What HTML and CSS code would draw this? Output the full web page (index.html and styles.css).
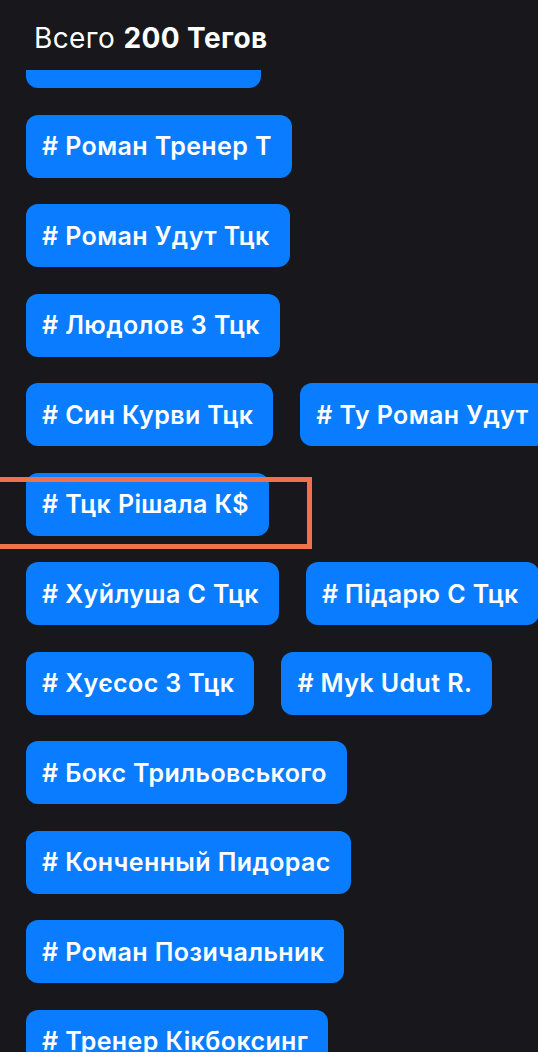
FILE: index.html
```html
<!DOCTYPE html>
<html lang="uk">
<head>
  <meta charset="UTF-8">
  <meta name="viewport" content="width=device-width, initial-scale=1.0">
  <title>Теги</title>
  <link rel="stylesheet" href="styles.css">
</head>
<body>
  <header class="tags-header">
    Всего <b>200 Тегов</b>
  </header>

  <main class="tags">
    <div class="tags-list">
      <div class="tag-row"><span class="tag"># Роман Тцк Уд</span></div>
      <div class="tag-row"><span class="tag"># Роман Тренер Т</span></div>
      <div class="tag-row"><span class="tag"># Роман Удут Тцк</span></div>
      <div class="tag-row"><span class="tag"># Людолов 3 Тцк</span></div>
      <div class="tag-row">
        <span class="tag"># Син Курви Тцк</span>
        <span class="tag"># Ту Роман Удут</span>
      </div>
      <div class="tag-row"><span class="tag"># Тцк Рішала К$</span></div>
      <div class="tag-row">
        <span class="tag"># Хуйлуша С Тцк</span>
        <span class="tag"># Підарю С Тцк</span>
      </div>
      <div class="tag-row">
        <span class="tag"># Хуєсос 3 Тцк</span>
        <span class="tag"># Myk Udut R.</span>
      </div>
      <div class="tag-row"><span class="tag"># Бокс Трильовського</span></div>
      <div class="tag-row"><span class="tag"># Конченный Пидорас</span></div>
      <div class="tag-row"><span class="tag"># Роман Позичальник</span></div>
      <div class="tag-row"><span class="tag"># Тренер Кікбоксинг</span></div>
    </div>
  </main>

  <div class="highlight"></div>
</body>
</html>
```

FILE: styles.css
```css
body {
  margin: 0;
  padding: 0;
  height: 1052px;
  overflow: hidden;
  background: #17171c;
  color: #ffffff;
  font-family: Inter, 'Noto Sans', sans-serif;
  position: relative;
}

.tags-header {
  height: 70px;
  box-sizing: border-box;
  padding: 21px 0 0 34px;
  font-size: 28px;
  font-weight: 400;
  letter-spacing: 0.4px;
}

.tags-header b {
  font-weight: 700;
}

.tags {
  height: 982px;
  overflow: hidden;
}

/* list is scrolled a little, first tag sits under the header */
.tags-list {
  margin-top: -45px;
  padding-left: 26px;
  display: flex;
  flex-direction: column;
  gap: 26.5px;
}

.tag-row {
  display: flex;
  gap: 27px;
  white-space: nowrap;
}

.tag {
  display: flex;
  align-items: center;
  height: 63px;
  padding: 0 20px 0 16px;
  background: #0a7cff;
  border-radius: 12px;
  font-size: 25px;
  font-weight: 600;
  letter-spacing: 0.4px;
  flex-shrink: 0;
}

.highlight {
  position: absolute;
  left: -10px;
  top: 477px;
  width: 312px;
  height: 62px;
  border: 5px solid #f0714a;
}
```
